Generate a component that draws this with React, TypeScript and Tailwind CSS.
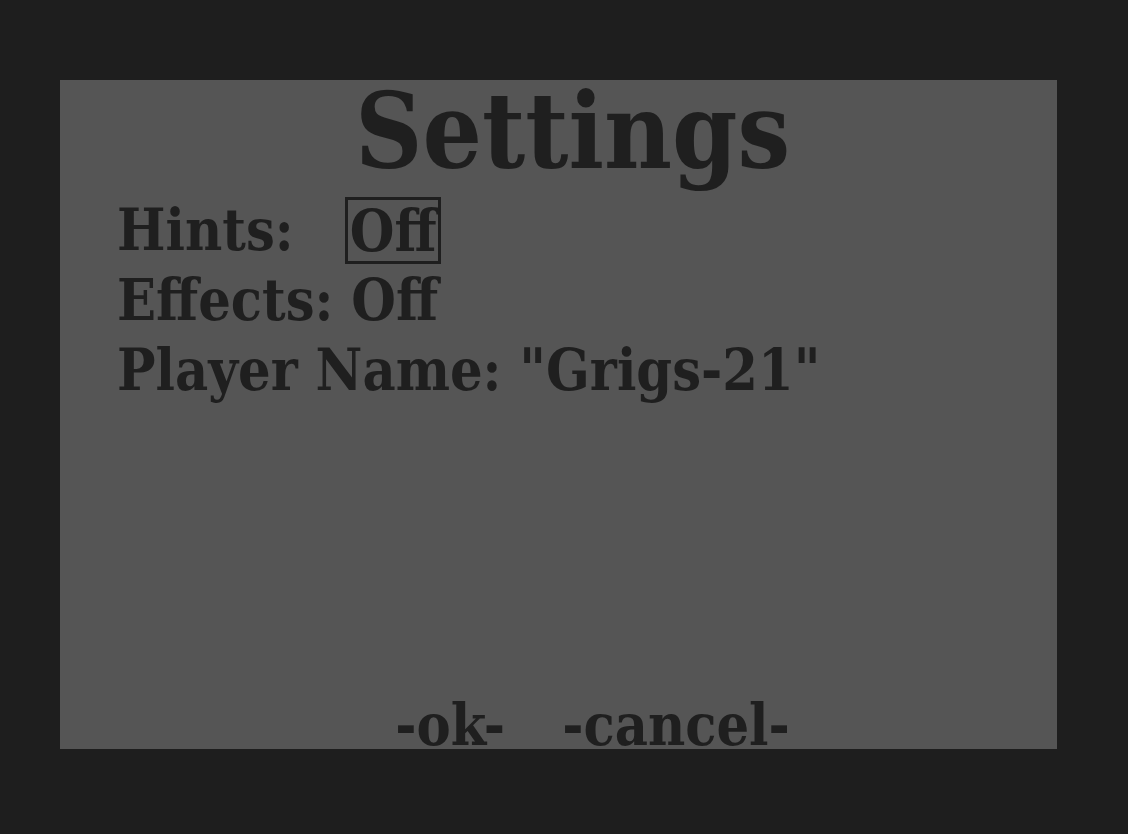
export default function App() {
  const font = { fontFamily: '"DejaVu Serif", "Liberation Serif", serif' };
  return (
    <div className="w-[1128px] h-[834px] bg-[#1e1e1e] pt-[80px] pl-[60px]">
      <div
        className="w-[997px] h-[669px] bg-[#555555] text-[#1f1f1f] font-black flex flex-col [font-stretch:condensed]"
        style={font}
      >
        <div className="text-center text-[104px] leading-[120px] pl-[28px] -mt-[8px]">Settings</div>
        <div className="pl-[57px] text-[57px] leading-[70px] mt-[3px]">
          <div className="flex items-center">
            <span>Hints:</span>
            <span className="ml-[51px] border-[3px] border-[#1f1f1f] leading-[61px] px-[2px]">Off</span>
          </div>
          <div>Effects: Off</div>
          <div>Player Name: "Grigs-21"</div>
        </div>
        <div className="mt-auto flex justify-center gap-[57px] text-[57px] leading-[66px] pl-[68px] -mb-[9px]">
          <span>-ok-</span>
          <span>-cancel-</span>
        </div>
      </div>
    </div>
  );
}
